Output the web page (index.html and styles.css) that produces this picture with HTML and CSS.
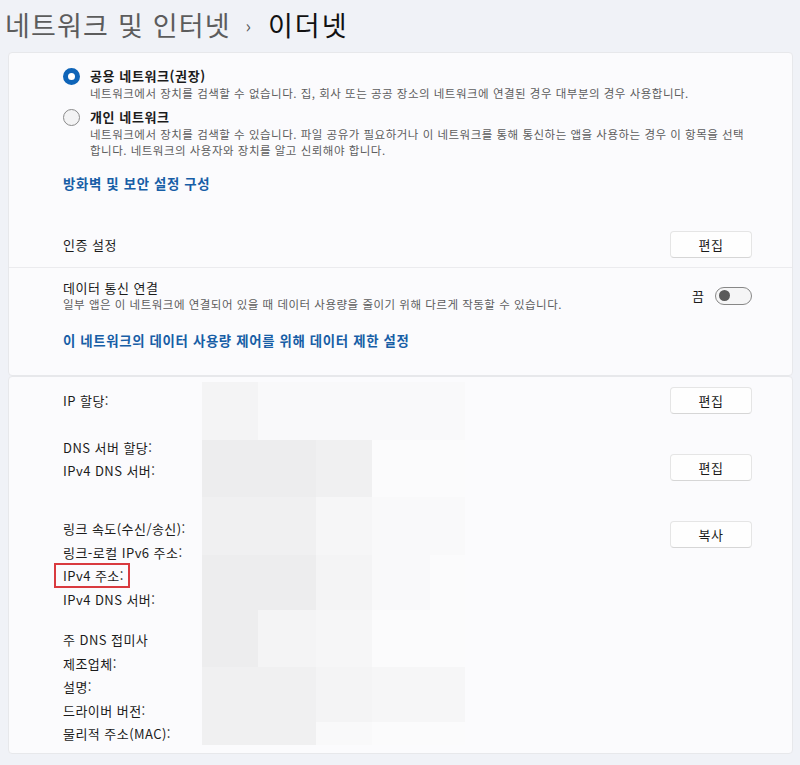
FILE: index.html
```html
<!DOCTYPE html>
<html lang="ko">
<head>
    <meta charset="UTF-8">
    <meta name="viewport" content="width=device-width, initial-scale=1.0">
    <title>이더넷</title>
    <link rel="stylesheet" href="styles.css">
</head>
<body>
    <header class="breadcrumb">
        <span class="crumb-parent">네트워크 및 인터넷</span>
        <span class="crumb-sep">›</span>
        <span class="crumb-current">이더넷</span>
    </header>

    <div class="card">
        <div class="network-type">
            <div class="option">
                <span class="radio checked"></span>
                <div>
                    <div class="option-title">공용 네트워크(권장)</div>
                    <div class="desc">네트워크에서 장치를 검색할 수 없습니다. 집, 회사 또는 공공 장소의 네트워크에 연결된 경우 대부분의 경우 사용합니다.</div>
                </div>
            </div>
            <div class="option second">
                <span class="radio"></span>
                <div>
                    <div class="option-title">개인 네트워크</div>
                    <div class="desc">네트워크에서 장치를 검색할 수 있습니다. 파일 공유가 필요하거나 이 네트워크를 통해 통신하는 앱을 사용하는 경우 이 항목을 선택<br>합니다. 네트워크의 사용자와 장치를 알고 신뢰해야 합니다.</div>
                </div>
            </div>
            <a class="link firewall" href="#">방화벽 및 보안 설정 구성</a>
        </div>

        <div class="row auth">
            <span class="row-title">인증 설정</span>
            <button class="btn">편집</button>
        </div>

        <div class="metered">
            <div class="row metered-row">
                <div>
                    <div class="row-title">데이터 통신 연결</div>
                    <div class="desc">일부 앱은 이 네트워크에 연결되어 있을 때 데이터 사용량을 줄이기 위해 다르게 작동할 수 있습니다.</div>
                </div>
                <div class="toggle-wrap">
                    <span class="toggle-label">끔</span>
                    <span class="toggle"><span class="knob"></span></span>
                </div>
            </div>
            <a class="link limit" href="#">이 네트워크의 데이터 사용량 제어를 위해 데이터 제한 설정</a>
        </div>
    </div>

    <div class="card details">
        <div class="group g1">
            <div class="labels">
                <div>IP 할당:</div>
            </div>
            <button class="btn">편집</button>
        </div>

        <div class="group g2">
            <div class="labels">
                <div>DNS 서버 할당:</div>
                <div>IPv4 DNS 서버:</div>
            </div>
            <button class="btn">편집</button>
        </div>

        <div class="group g3">
            <div class="labels">
                <div>링크 속도(수신/송신):</div>
                <div>링크-로컬 IPv6 주소:</div>
                <div><span class="marked">IPv4 주소:</span></div>
                <div>IPv4 DNS 서버:</div>
                <div class="gap-top">주 DNS 접미사</div>
                <div>제조업체:</div>
                <div>설명:</div>
                <div>드라이버 버전:</div>
                <div>물리적 주소(MAC):</div>
            </div>
            <button class="btn">복사</button>
        </div>

        <!-- blurred values -->
        <div class="mosaic">
            <span class="t3"></span><span class="t5"></span><span class="t5"></span><span class="t5"></span><span class="t5"></span>
            <span class="t1"></span><span class="t1"></span><span class="t2"></span><span class="t6"></span><span class="t6"></span>
            <span class="t2"></span><span class="t2"></span><span class="t4"></span><span class="t5"></span><span class="t5"></span>
            <span class="t1"></span><span class="t1"></span><span class="t3"></span><span class="t5"></span><span class="t6"></span>
            <span class="t1"></span><span class="t3"></span><span class="t4"></span><span class="t6"></span><span class="t6"></span>
            <span class="t2"></span><span class="t2"></span><span class="t3"></span><span class="t4"></span><span class="t4"></span>
            <span class="t2"></span><span class="t2"></span><span class="t5"></span><span class="t6"></span><span class="t6"></span>
        </div>
    </div>
</body>
</html>
```

FILE: styles.css
```css
body {
    font-family: "Noto Sans CJK KR", "Noto Sans", sans-serif;
    background: #f0f2f7;
    color: #1b1b1b;
    margin: 0;
}

.breadcrumb {
    height: 52px;
    padding: 5px 0 0 5px;
    box-sizing: border-box;
    font-size: 27px;
    line-height: 40px;
    letter-spacing: 1.2px;
    white-space: nowrap;
}

.crumb-parent {
    color: #5c5c5c;
}

.crumb-sep {
    color: #5c5c5c;
    font-size: 18px;
    margin: 0 7px 0 6px;
    position: relative;
    top: -3px;
}

.crumb-current {
    color: #111111;
    letter-spacing: 2px;
}

.card {
    margin: 0 7px 0 8px;
    background: #fbfbfd;
    border: 1px solid #e7e8eb;
    border-radius: 4px;
}

/* network profile */
.network-type {
    padding: 14px 40px 28px 54px;
}

.option {
    display: flex;
    gap: 10px;
}

.option.second {
    margin-top: 7px;
}

.radio {
    width: 17px;
    height: 17px;
    box-sizing: border-box;
    border-radius: 50%;
    border: 1px solid #8a8a8a;
    background: #f3f3f4;
    flex-shrink: 0;
    margin-top: 1px;
}

.radio.checked {
    border: 5px solid #0e64b8;
    background: #ffffff;
}

.option-title {
    font-size: 13px;
    font-weight: 700;
    line-height: 18px;
    letter-spacing: 0.6px;
}

.desc {
    font-size: 11.5px;
    line-height: 16px;
    letter-spacing: 0.5px;
    color: #5d5d5d;
}

.link {
    display: block;
    font-size: 13.4px;
    font-weight: 600;
    line-height: 20px;
    letter-spacing: 0.65px;
    color: #175ea6;
    text-decoration: none;
}

.firewall {
    margin-top: 15px;
}

.row {
    display: flex;
    align-items: center;
    justify-content: space-between;
    padding: 0 40px 0 54px;
}

.row-title {
    font-size: 13px;
    line-height: 17px;
    letter-spacing: 0.5px;
}

.auth {
    height: 46px;
    border-bottom: 1px solid #ebebee;
}

.btn {
    width: 82px;
    height: 27px;
    box-sizing: border-box;
    background: #fefefe;
    border: 1px solid #e5e5e5;
    border-bottom-color: #d6d6d6;
    border-radius: 4px;
    font-family: inherit;
    font-size: 13px;
    letter-spacing: 0.5px;
    color: #1b1b1b;
    padding: 0;
    flex-shrink: 0;
}

.metered {
    padding: 11px 0 25px;
}

.toggle-wrap {
    display: flex;
    align-items: center;
    gap: 11px;
}

.toggle-label {
    font-size: 13px;
}

.toggle {
    width: 37px;
    height: 18px;
    box-sizing: border-box;
    border: 1px solid #878787;
    border-radius: 9px;
    background: #f5f5f6;
    display: flex;
    align-items: center;
    padding-left: 3px;
}

.knob {
    width: 11px;
    height: 11px;
    border-radius: 50%;
    background: #5a5a5a;
}

.limit {
    margin: 18px 0 0 54px;
}

/* details */
.details {
    position: relative;
    padding: 10px 40px 8px 54px;
}

.group {
    display: flex;
    justify-content: space-between;
    align-items: flex-start;
}

.labels {
    font-size: 13px;
    line-height: 23.4px;
    letter-spacing: 0.45px;
}

.g1 .labels {
    padding-top: 2px;
}

.g2 {
    margin-top: 22px;
}

.g2 .btn {
    margin-top: 18px;
}

.g3 {
    margin-top: 34.5px;
}

.g3 .btn {
    margin-top: 4px;
}

.gap-top {
    margin-top: 17.4px;
}

.marked {
    display: inline-block;
    line-height: 21px;
    border: 2px solid #d93a3f;
    padding: 0 4px 0 7px;
    margin: -1px 0 -1px -9px;
}

.mosaic {
    position: absolute;
    left: 193px;
    top: 5px;
    display: grid;
    grid-template-columns: 56px 58px 56px 58px 35px;
    grid-template-rows: 58px 57px 58px 55px 57px 55px 23px;
}

.t1 { background: #ededee; }
.t2 { background: #f0f0f1; }
.t3 { background: #f4f4f5; }
.t4 { background: #f6f6f7; }
.t5 { background: #f9f9fa; }
.t6 { background: #fbfbfc; }
```
